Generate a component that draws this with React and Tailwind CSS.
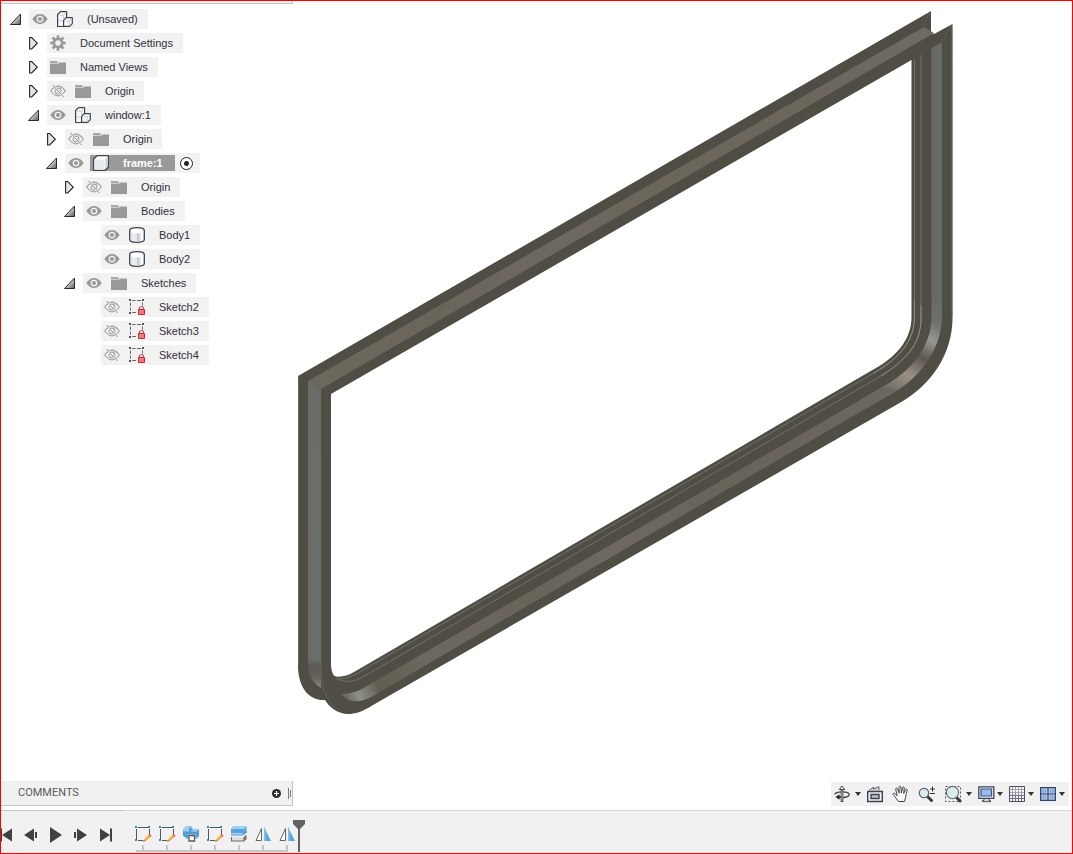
import React from "react";

const INK = "#3d424d";

function EyeIcon({ hidden }) {
  if (hidden) {
    return (
      <svg width="16" height="16" viewBox="0 0 16 16" fill="none" stroke="#a3a3a3">
        <path d="M.7 8C3.5 4.2 6 3.2 8 3.2S12.500 4.200 15.300 8C12.500 11.800 10 12.800 8 12.800S3.500 11.800.7 8Z" strokeWidth="1.200" />
        <circle cx="8" cy="8" r="2.800" strokeWidth="1.200" />
        <path d="M2.500 2 13.500 14" stroke="#f2f2f2" strokeWidth="2" />
        <path d="M2.500 2 13.500 14" stroke="#8c8c8c" strokeWidth="1" />
      </svg>
    );
  }
  return (
    <svg width="16" height="16" viewBox="0 0 16 16" fill="none">
      <path d="M.3 8C3 4.200 5.500 3 8 3s5 1.200 7.700 5C13 11.800 10.500 13 8 13S3 11.800.3 8Z" fill="#999" />
      <circle cx="8" cy="8" r="2.700" stroke="#f2f2f2" strokeWidth="1.300" />
    </svg>
  );
}

function FolderIcon() {
  return (
    <svg width="16" height="16" viewBox="0 0 16 16">
      <path d="M0 2h7l1 2v1H0Z" fill="#a8a8a8" />
      <path d="M0 5h8l1.500-1.500H16V15H0Z" fill="#999" />
      <path d="M0 4.500h7.500l1.500-1.500" stroke="#d5d5d5" fill="none" strokeWidth=".8" />
    </svg>
  );
}

function GearIcon() {
  return (
    <svg width="16" height="16" viewBox="0 0 16 16" stroke="#999" fill="none">
      <path d="M8 .2V4M8 12v3.800M.2 8H4M12 8h3.800M2.500 2.500l2.700 2.700M10.800 10.800l2.700 2.700M13.500 2.500l-2.700 2.700M5.200 10.800l-2.700 2.700" strokeWidth="2.600" />
      <circle cx="8" cy="8" r="4.200" strokeWidth="2.800" />
    </svg>
  );
}

function AssemblyIcon() {
  return (
    <svg width="16" height="16" viewBox="0 0 16 16" stroke={INK} strokeWidth="1.200" strokeLinejoin="round">
      <path d="M.6 3.500 3.500.6H9.600V6.500L7 9.500v6H.6Z" fill="#f8f8fa" />
      <path d="M6.600 9.300 9.300 6.600h6v6l-2.700 2.800h-6Z" fill="#f8f8fa" />
      <path d="M1.500 4.200h5.100v4.600M6.600 4.200 9 1.600M1.500 9.800h4.400M7.400 10h4.800v4.600M12.200 10l2.400-2.500" fill="none" stroke="#c9cbd2" strokeWidth="1" />
    </svg>
  );
}

function ComponentIcon() {
  return (
    <svg width="16" height="16" viewBox="0 0 16 16" strokeLinejoin="round">
      <path d="M.7 4 4 .7H15.300V12L12 15.300H.7Z" fill="#fff" stroke={INK} strokeWidth="1.300" />
      <path d="M1.500 4.500h9.800v10H1.500Z" fill="#e9ebef" />
      <path d="M12 4.300 14.600 1.800V11.700L12 14.300Z" fill="#d5d8de" />
    </svg>
  );
}

function BodyIcon() {
  return (
    <svg width="16" height="16" viewBox="0 0 16 16">
      <path d="M.7 3.500C.7 1.500 3 .7 8 .7s7.300.8 7.300 2.800v9c0 2-2.300 2.800-7.300 2.800s-7.300-.8-7.300-2.800Z" fill="#fff" stroke={INK} strokeWidth="1.300" />
      <path d="M2 5.300q3 1 6 1v8q-4 0-6-1.300Z" fill="#e6e8ec" />
      <path d="M4 6h2v8H4Z" fill="#f0f1f4" />
      <path d="M8 6.300h2.500v8H8Z" fill="#c7cbd3" />
      <path d="M10.500 6.200H12v7.600h-1.500Z" fill="#e4e6ea" />
    </svg>
  );
}

function LockedSketchIcon() {
  return (
    <svg width="16" height="16" viewBox="0 0 16 16">
      <path d="M3 1.500h3.500M8 1.500h4M1.500 3.500v3.500M1.500 8.500v3M13.500 3.500v3M3 13.500h4" stroke="#666" fill="none" />
      <path d="M0 0h2v2H0ZM13 0h2v2h-2ZM0 13h2v2H0Z" fill="#555" />
      <path d="M10.500 11V9.500a2 2 0 0 1 4 0V11" stroke="#d9454a" fill="none" strokeWidth="1.200" />
      <path d="M9.500 10.500h6v5h-6Z" fill="#e88083" stroke="#c92a30" />
    </svg>
  );
}

const ICONS = {
  gear: GearIcon,
  folder: FolderIcon,
  assembly: AssemblyIcon,
  component: ComponentIcon,
  body: BodyIcon,
  sketch: LockedSketchIcon,
};

const ROWS = [
  { label: "(Unsaved)", pad: "pl-0", arrow: "open", eye: "on", icon: "assembly" },
  { label: "Document Settings", pad: "pl-[18px]", arrow: "closed", icon: "gear" },
  { label: "Named Views", pad: "pl-[18px]", arrow: "closed", icon: "folder" },
  { label: "Origin", pad: "pl-[18px]", arrow: "closed", eye: "off", icon: "folder" },
  { label: "window:1", pad: "pl-[18px]", arrow: "open", eye: "on", icon: "assembly" },
  { label: "Origin", pad: "pl-9", arrow: "closed", eye: "off", icon: "folder" },
  { label: "frame:1", pad: "pl-9", arrow: "open", eye: "on", icon: "component", active: true },
  { label: "Origin", pad: "pl-[54px]", arrow: "closed", eye: "off", icon: "folder" },
  { label: "Bodies", pad: "pl-[54px]", arrow: "open", eye: "on", icon: "folder" },
  { label: "Body1", pad: "pl-[72px]", eye: "on", icon: "body" },
  { label: "Body2", pad: "pl-[72px]", eye: "on", icon: "body" },
  { label: "Sketches", pad: "pl-[54px]", arrow: "open", eye: "on", icon: "folder" },
  { label: "Sketch2", pad: "pl-[72px]", eye: "off", icon: "sketch" },
  { label: "Sketch3", pad: "pl-[72px]", eye: "off", icon: "sketch" },
  { label: "Sketch4", pad: "pl-[72px]", eye: "off", icon: "sketch" },
];

function Arrow({ kind }) {
  return (
    <svg width="20" height="16" viewBox="0 0 20 16">
      {kind === "open" ? (
        <path d="M1.500 13.500 11.500 3v10.500Z" fill="url(#arrow)" stroke="#2a2a2a" />
      ) : (
        <path d="M2.600 2.500h2.100L10.300 8.200 4.700 14H2.600Z" fill="#e3e5e9" stroke="#222" strokeWidth="1.100" />
      )}
    </svg>
  );
}

function Row({ row }) {
  const Icon = ICONS[row.icon];
  return (
    <li className={`flex h-5 items-center ${row.pad}`}>
      {row.arrow ? (
        <button type="button" aria-label={`Toggle ${row.label}`} className="w-5">
          <Arrow kind={row.arrow} />
        </button>
      ) : (
        <span className="w-5" />
      )}
      <div className="flex h-5 items-center bg-[#f2f2f2] pl-[3px]">
        {row.eye && (
          <button type="button" aria-label={`Visibility of ${row.label}`} className={row.active ? "mr-1.5" : "mr-[9px]"}>
            <EyeIcon hidden={row.eye === "off"} />
          </button>
        )}
        {row.active ? (
          <>
            <button type="button" className="flex h-4 items-center bg-[#999] pr-3 pl-[3px] font-bold text-white">
              <Icon />
              <span className="pl-3.5">{row.label}</span>
            </button>
            <input
              type="radio"
              defaultChecked
              aria-label={`Activate ${row.label}`}
              className="mr-[7px] ml-[5px] size-[13px] appearance-none rounded-full border border-[#222] bg-white bg-[radial-gradient(circle,#222_2px,transparent_3px)]"
            />
          </>
        ) : (
          <button type="button" className="flex h-5 items-center pr-2.5">
            <span className="w-4">
              <Icon />
            </span>
            <span className="pl-3.5">{row.label}</span>
          </button>
        )}
      </div>
    </li>
  );
}

function Model() {
  return (
    <svg className="col-start-1 row-start-1 h-full w-full" viewBox="1 1 1071 809" role="img" aria-label="Window frame model">
      <defs>
        <linearGradient id="arrow" x1="0" y1="0" x2="1" y2="1">
          <stop offset=".3" stopColor="#f5f5f5" />
          <stop offset="1" stopColor="#555" />
        </linearGradient>
        <linearGradient id="leftWeb" gradientUnits="userSpaceOnUse" x1="0" y1="380" x2="0" y2="694">
          <stop offset="0" stopColor="#6b6c68" />
          <stop offset=".89" stopColor="#6a6d6a" />
          <stop offset=".91" stopColor="#5b5954" />
          <stop offset=".95" stopColor="#67635d" />
          <stop offset=".98" stopColor="#8a857d" />
          <stop offset="1" stopColor="#5f5b53" />
        </linearGradient>
        <linearGradient id="rightWeb" gradientUnits="userSpaceOnUse" x1="940" y1="300" x2="888" y2="396">
          <stop offset="0" stopColor="#676a66" />
          <stop offset=".2" stopColor="#6e706c" />
          <stop offset=".36" stopColor="#979894" />
          <stop offset=".54" stopColor="#5b5751" />
          <stop offset=".74" stopColor="#9a9084" />
          <stop offset=".92" stopColor="#77726a" />
          <stop offset="1" stopColor="#6b665e" />
        </linearGradient>
        <linearGradient id="bottomWeb" gradientUnits="userSpaceOnUse" x1="340" y1="694" x2="880" y2="392">
          <stop offset="0" stopColor="#5d5b54" />
          <stop offset=".025" stopColor="#8f908a" />
          <stop offset=".06" stopColor="#605d51" />
          <stop offset=".15" stopColor="#6c685f" />
          <stop offset=".35" stopColor="#68645a" />
          <stop offset=".5" stopColor="#6d6862" />
          <stop offset=".7" stopColor="#68645a" />
          <stop offset="1" stopColor="#6b665e" />
        </linearGradient>
        <linearGradient id="topWeb" gradientUnits="userSpaceOnUse" x1="308" y1="385" x2="928" y2="30">
          <stop offset="0" stopColor="#6c685d" />
          <stop offset=".2" stopColor="#69655a" />
          <stop offset=".42" stopColor="#6d6862" />
          <stop offset=".5" stopColor="#6a665a" />
          <stop offset=".8" stopColor="#6a665c" />
          <stop offset="1" stopColor="#6f6a64" />
        </linearGradient>
      </defs>

      <path
        fill="#504d45"
        fillRule="evenodd"
        d="M298 376 931 11V33L934 34 952.500 24V318C952.500 355 930 385 903 401L373 705C362 712 355 714 348 714C338 714 329 707 325 700C310 701 298 689 298 665Z
           M331 394V666Q332 676 336 676.500Q345 677.500 354 672L869 372C896 358 911.500 340 911.500 317V60Z"
      />
      <path fill="url(#topWeb)" d="M308 381 924 27 934 33 321 389Z" />
      <path fill="url(#leftWeb)" d="M308 381 321 389V688Q308 680 308 665Z" />
      <path fill="url(#rightWeb)" d="M931.500 48 942 42V317C942 346 922 375 898 390L860 412V400L884 386C913 370 931.500 345 931.500 317Z" />
      <path fill="url(#bottomWeb)" d="M340 694Q353 695 367 686L861 399.500 884 386 898 390 860 412 373 696Q359 704 349 700 343 697 340 694Z" />

      <g fill="none" stroke="#737068">
        <path d="M914.500 59V317C914 341 900 358 874 373L358 673Q347 679.500 336 679" />
        <path d="M921 55V318C921 346 904 361 881 376L363 677Q351 684 339 680" />
      </g>
      <path d="M914.500 300V317C914 341 900 358 874 373M921 305V318C921 346 904 361 881 376" fill="none" stroke="#8f8c83" />
      <g fill="none" stroke="#7b7870" strokeWidth=".7">
        <path strokeDasharray="2 2" d="M930 13 922 27M951 26 942 41" />
        <path stroke="#74766e" d="M298.500 377V665M952 26V318" />
        <path stroke="#6c685f" d="M321.500 660V677C322 690 329 704 337 709" />
      </g>
    </svg>
  );
}

function Caret() {
  return (
    <svg width="6" height="16" viewBox="0 0 6 16">
      <path d="M0 6h6L3 10Z" fill="#333" />
    </svg>
  );
}

function OrbitIcon() {
  return (
    <svg width="16" height="18" viewBox="0 0 16 18" fill="none" stroke={INK} strokeWidth="1.300">
      <path d="M7 12.500h1.500C12.800 12.500 15.300 11.200 15.300 9.500S12 6.800 8 6.800.8 7.900.8 9.500" />
      <path d="M8 4v13" stroke="#333" strokeWidth="2.600" />
      <path d="M8 4v12" stroke="#e8e8e8" strokeWidth=".9" />
      <path d="M5.300 4.500 8 1l2.700 3.500Z" fill="#fff" strokeWidth="1" />
      <path d="m1.500 12 4-2.700v5.400Z" fill="#222" stroke="none" />
      <path d="M5 12h2" stroke="#222" />
    </svg>
  );
}

function LookAtIcon() {
  return (
    <svg width="16" height="18" viewBox="0 0 16 18" fill="none" stroke={INK}>
      <path d="M2 5.500 6.500 2v2L12 1.500V5.500" fill="#c7ccd2" stroke="#686e78" />
      <path d="M.7 6.500h14.600v10H.7Z" fill="#f2f3f5" strokeWidth="1.400" />
      <path d="M4 9.500h8v4H4Z" fill="#b9bfc6" strokeWidth="1.400" />
    </svg>
  );
}

function HandIcon() {
  return (
    <svg width="18" height="18" viewBox="0 0 18 18">
      <path
        d="M6.500 16.500C5 14 2.500 11.500 1.200 9.500c-.5-1 .8-1.700 1.700-.9l2.300 2.200L3.700 4.200c-.2-1.200 1.300-1.500 1.700-.4l1.800 4.400L7 2.200C7 1 8.700 1 8.900 2.200l.5 5.800 1.200-5.500c.3-1.100 1.800-.8 1.700.4l-.6 5.600 1.900-3.900c.5-1 1.900-.4 1.600.7-.7 2.500-1.200 4-1.400 6-.2 2.100-.9 3.300-1.400 5.200Z"
        fill="#fafafa"
        stroke={INK}
        strokeWidth="1"
        strokeLinejoin="round"
      />
    </svg>
  );
}

function ZoomIcon() {
  return (
    <svg width="18" height="18" viewBox="0 0 18 18">
      <path d="m9.500 11.500 4 4" stroke="#333a45" strokeWidth="3" strokeLinecap="round" />
      <circle cx="6" cy="8" r="4.700" fill="#dcebee" stroke="#59616d" strokeWidth="1.200" />
      <path d="M12 4h5M14.500 1.500v5M12 8.500h5" stroke="#333" strokeWidth="1" />
    </svg>
  );
}

function ZoomWindowIcon() {
  return (
    <svg width="18" height="18" viewBox="0 0 18 18">
      <path d="M1.500 1.500h15v15h-15Z" fill="none" stroke="#555" strokeDasharray="2 2" />
      <path d="m12.500 12.500 3.500 3.500" stroke="#333a45" strokeWidth="3" strokeLinecap="round" />
      <circle cx="8.500" cy="7.500" r="6.100" fill="#dbebec" stroke="#69717b" strokeWidth="1.200" />
    </svg>
  );
}

function DisplayIcon() {
  return (
    <svg width="17" height="18" viewBox="0 0 17 18">
      <path d="M.8 1.800h15v11.500H.8Z" fill="#eef0f3" stroke={INK} strokeWidth="1.300" />
      <path d="M3 4h10.500v7H3Z" fill="#9dbcec" stroke="#31568f" strokeWidth="1.200" />
      <path d="M6 13.500h5v2h1.500v1.200h-8v-1.200H6Z" fill="#dadde2" stroke={INK} strokeWidth=".9" />
    </svg>
  );
}

function GridIcon() {
  return (
    <svg width="17" height="18" viewBox="0 0 17 18" fill="none">
      <path d="M.5 1.500h15v15H.5Z" fill="#f7f7f9" />
      <path d="M3.500 1v15M6.500 1v15M9.500 1v15M12.500 1v15M0 4.500h16M0 7.500h16M0 10.500h16M0 13.500h16" stroke="#a0a4ab" />
      <path d="M0 10.500h16M0 13.500h16M3.500 9v7M6.500 9v7M9.500 9v7M12.500 9v7" stroke="#6f747e" />
      <path d="M.5 1.500h15v15H.5Z" stroke="#4b505a" />
    </svg>
  );
}

function ViewportsIcon() {
  return (
    <svg width="16" height="18" viewBox="0 0 16 18">
      <path d="M.7 2.700h14.600v12.600H.7Z" fill="#b5cdf1" stroke="#2d466f" strokeWidth="1.300" />
      <path d="M8 2.500v13M.5 9h15" stroke="#2d466f" strokeWidth="1.200" />
      <path d="M3 5h2.500v2H3ZM10.500 5H13v2h-2.500ZM3 11.200h2.500v2H3ZM10.500 11.200H13v2h-2.500Z" fill="#dae6f9" stroke="#7594c9" />
    </svg>
  );
}

const NAV = [
  { name: "Orbit", icon: OrbitIcon, caret: "ml-[5px]", space: "mr-1.5" },
  { name: "Look at", icon: LookAtIcon, space: "mr-[9px]" },
  { name: "Pan", icon: HandIcon, space: "mr-2" },
  { name: "Zoom", icon: ZoomIcon, space: "mr-2" },
  { name: "Zoom window", icon: ZoomWindowIcon, caret: "ml-1", space: "mr-1.5" },
  { name: "Display settings", icon: DisplayIcon, caret: "ml-0.5", space: "mr-1.5" },
  { name: "Grid and snaps", icon: GridIcon, caret: "ml-0.5", space: "mr-1.5" },
  { name: "Viewports", icon: ViewportsIcon, caret: "ml-[3px]", space: "mr-1" },
];

function SketchFeature() {
  return (
    <>
      <path d="M3 1.500h10M1.500 3v10M14.500 3v5M3 14.500h5" stroke="#555" />
      <path d="M0 0h2v2H0ZM13 0h2v2h-2ZM0 13h2v2H0Z" fill="#1b87dc" />
      <path d="m8.500 15.700 1-3 4-3.800 2 2-4 3.800Z" fill="#f5b04c" />
      <path d="m13.300 9 1.200-1.200 2 2L15.300 11Z" fill="#e85050" />
      <path d="m8.200 15.800.6-1.800 1.300 1.200Z" fill="#555" />
    </>
  );
}

function CombineFeature() {
  return (
    <>
      <path d="M0 3 3.500.3 8.500 0v2.500l2 .5 5.500.5V10l-3 3H5L0 10Z" fill="#4f9dd6" />
      <path d="M0 3 3.500.3 8.500 0 6 3v3L0 5ZM7.500 5 10.500 2.500 16 3.500 13 6Z" fill="#9bcdf1" />
      <path d="M5 8.500h7.500V16H5Z" fill="#f1f1f1" />
      <path d="M6 9.500h5.500V15H6Z" fill="#fff" stroke="#555" strokeWidth="1.300" />
    </>
  );
}

function SplitFeature() {
  return (
    <>
      <path d="M0 3 3 0h12.500v5L13 7.500H0Z" fill="#58a4dc" />
      <path d="M0 3 3 0h12.500L13 3Z" fill="#9ed0f4" />
      <path d="M0 9h11.500L16 5.500" stroke="#2f8fd6" strokeWidth="1.200" />
      <path d="M0 11h13l2.500-2.500V13L13 15.500H0Z" fill="#6b6b6b" />
      <path d="M1 11h11.500v3.500H1Z" fill="#dedede" />
    </>
  );
}

function MirrorFeature() {
  return (
    <>
      <path d="M6.500 2.500v12H1Z" fill="#fff" stroke="#666" />
      <path d="M9 1V15h7Z" fill="#5aa7de" />
      <path d="M9 1V15h2V5.500Z" fill="#7dbbe8" />
    </>
  );
}

const FEATURES = [
  { name: "Sketch 2", art: SketchFeature, rail: "M8 5h16v2H5V5Z" },
  { name: "Sketch 3", art: SketchFeature, rail: "M0 5h24v2H0Z" },
  { name: "Combine", art: CombineFeature, rail: "M0 5h24v2H0Z" },
  { name: "Sketch 4", art: SketchFeature, rail: "M0 5h24v2H0Z" },
  { name: "Split", art: SplitFeature, rail: "M0 5h24v2H0Z" },
  { name: "Mirror 1", art: MirrorFeature, rail: "M0 5h24v2H0Z" },
  { name: "Mirror 2", art: MirrorFeature, rail: "M0 5h13v2H0Z" },
];

const PLAYBACK = [
  { name: "Step back", d: "M6 10 16 3.500v13ZM17 7h2v6h-2Z" },
  { name: "Play", d: "M7 2 19 10 7 18Z" },
  { name: "Step forward", d: "M6 7h2v6H6ZM9 3.500 19 10 9 16.500Z" },
  { name: "Go to end", d: "M7 3.500 17 10 7 16.500ZM17 3.500h2v13h-2Z" },
];

function Timeline() {
  return (
    <footer className="flex h-[43px] overflow-hidden bg-[#f1f1f1]">
      <div className="flex w-[122px] items-center border-t border-[#c4c4c4]">
        <button type="button" aria-label="Go to start" className="mt-1.5 w-[17px]">
          <svg width="17" height="20" viewBox="0 0 17 20">
            <path d="M0 3.500h1v13H0ZM1 10l10-6.500v13Z" fill="#3f4042" />
          </svg>
        </button>
        {PLAYBACK.map((p) => (
          <button key={p.name} type="button" aria-label={p.name} className="mt-1.5 w-[25px]">
            <svg width="25" height="20" viewBox="0 0 25 20">
              <path d={p.d} fill="#3f4042" />
            </svg>
          </button>
        ))}
      </div>
      <div className="flex flex-1 border-t border-[#d9d9d9] pl-2">
        <ul className="flex pt-[15px]">
          {FEATURES.map((f) => (
            <li key={f.name} className="w-6">
              <button type="button" aria-label={f.name} className="block pl-1">
                <svg width="20" height="16" viewBox="0 0 20 16" fill="none">
                  <f.art />
                </svg>
              </button>
              <svg width="24" height="8" viewBox="0 0 24 8" className="mt-[3px]">
                <path d="M11 0h2v5h-2Z" fill="#c6c6c6" />
                <path d={f.rail} fill="#c6c6c6" />
              </svg>
            </li>
          ))}
        </ul>
        <svg width="14" height="33" viewBox="0 0 14 33" className="-ml-[7px] mt-[9px]" role="img" aria-label="Timeline marker">
          <path d="M1 0h12v4L8 9v23H6V9L1 4Z" fill="#636363" />
        </svg>
      </div>
    </footer>
  );
}

export default function App() {
  return (
    <div className="flex min-h-screen flex-col border border-[#ff0000] bg-white font-['Liberation_Sans',Arial,sans-serif] text-[11px] leading-4 text-[#30303a]">
      <main className="grid flex-1">
        <Model />
        <div className="col-start-1 row-start-1 flex flex-col justify-between pb-1">
          <nav aria-label="Browser">
            <div className="h-[3px] w-[292px] border-r border-b border-[#c4c4c4] bg-[#f2f2f2]" />
            <ul className="flex flex-col gap-1 pt-[5px] pl-2">
              {ROWS.map((row, i) => (
                <Row key={i} row={row} />
              ))}
            </ul>
          </nav>
          <div className="flex items-end justify-between">
            <section className="flex h-[25px] w-[292px] items-center border-r border-b border-[#c4c4c4] bg-[#f1f1f1] pl-[17px]">
              <h2 className="flex-1 font-[Roboto,sans-serif] text-[#5a5a5a]">COMMENTS</h2>
              <button type="button" aria-label="Add comment">
                <svg width="9" height="9" viewBox="0 0 9 9">
                  <circle cx="4.500" cy="4.500" r="4.500" fill="#2b2b2b" />
                  <path d="M4.500 2v5M2 4.500h5" stroke="#fff" strokeWidth="1.200" />
                </svg>
              </button>
              <svg width="3" height="11" viewBox="0 0 3 11" className="mr-px ml-[7px]">
                <path d="M.5 0v11M2.500 2v7" stroke="#777" />
              </svg>
            </section>
            <div role="toolbar" aria-label="Navigation" className="mr-[3px] flex h-6 items-center bg-[#f1f1f1] pl-[3px]">
              {NAV.map((n) => (
                <button key={n.name} type="button" aria-label={n.name} className={`flex items-center ${n.space}`}>
                  <n.icon />
                  {n.caret && (
                    <span className={n.caret}>
                      <Caret />
                    </span>
                  )}
                </button>
              ))}
            </div>
          </div>
        </div>
      </main>
      <Timeline />
    </div>
  );
}
